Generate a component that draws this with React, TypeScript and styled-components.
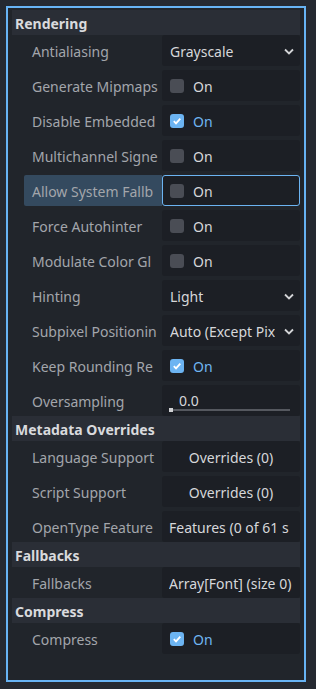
import React from 'react';
import styled, { createGlobalStyle } from 'styled-components';

const GlobalStyle = createGlobalStyle`
  html, body {
    margin: 0;
    padding: 0;
    background: #252931;
    font-family: "Noto Sans", "Open Sans", sans-serif;
    font-size: 14px;
  }
`;

const Panel = styled.div`
  box-sizing: border-box;
  margin: 6px;
  width: 300px;
  height: 676px;
  border: 2px solid #67b3f4;
  background: #21252b;
  padding: 2px 4px 0 4px;
  display: flex;
  flex-direction: column;
`;

const Header = styled.div`
  box-sizing: border-box;
  height: 25px;
  line-height: 24px;
  padding-top: 2px;
  background: #2a2e36;
  padding-left: 3px;
  font-weight: 700;
  color: #d9dadd;
`;

const Rows = styled.div`
  display: flex;
  flex-direction: column;
  gap: 4px;
`;

const Row = styled.div`
  display: grid;
  grid-template-columns: 150px 138px;
  height: 31px;
`;

const Label = styled.div<{ $active?: boolean }>`
  box-sizing: border-box;
  margin-left: 12px;
  padding: 2px 0 0 8px;
  line-height: 29px;
  color: #a3a6ab;
  white-space: nowrap;
  overflow: hidden;
  background: ${(p) => (p.$active ? '#344a5f' : 'transparent')};
  border-radius: 2px 0 0 2px;
`;

const Value = styled.div<{ $focus?: boolean; $center?: boolean; $pad?: number }>`
  box-sizing: border-box;
  position: relative;
  display: flex;
  align-items: center;
  justify-content: ${(p) => (p.$center ? 'center' : 'flex-start')};
  gap: 9px;
  padding: 1px 3px 0 ${(p) => p.$pad ?? 7}px;
  background: #1c1f25;
  border: ${(p) => (p.$focus ? '1px solid #6cb4f2' : '1px solid transparent')};
  border-radius: 3px;
  color: #d6d7da;
  white-space: nowrap;
  overflow: hidden;
`;

const ValueText = styled.span`
  flex: 1;
  overflow: hidden;
`;

const Box = styled.span<{ $on?: boolean }>`
  flex: none;
  width: 14px;
  height: 14px;
  border-radius: 3px;
  background: ${(p) => (p.$on ? '#6cb4f2' : '#4a4d55')};
  display: flex;
  align-items: center;
  justify-content: center;
`;

const OnText = styled.span<{ $on?: boolean }>`
  color: ${(p) => (p.$on ? '#6fb5f1' : '#d6d7da')};
`;

const SliderText = styled.span`
  padding-left: 9px;
  margin-top: -2px;
`;

const Track = styled.div`
  position: absolute;
  left: 6px;
  right: 9px;
  bottom: 4px;
  height: 2px;
  background: #55585f;
`;

const Grabber = styled.div`
  position: absolute;
  left: 0;
  top: -1px;
  width: 4px;
  height: 4px;
  background: #d0d1d4;
`;

const Chevron = () => (
  <svg width="10" height="7" viewBox="0 0 10 7" style={{ flex: 'none', marginRight: 2 }}>
    <path d="M1 1.5 L5 5.5 L9 1.5" stroke="#d2d3d6" strokeWidth="1.8" fill="none" />
  </svg>
);

const Check = ({ on }: { on?: boolean }) => (
  <Box $on={on}>
    {on && (
      <svg width="10" height="10" viewBox="0 0 10 10">
        <path d="M1.8 5.2 L4 7.4 L8.3 2.6" stroke="#ffffff" strokeWidth="1.8" fill="none" />
      </svg>
    )}
  </Box>
);

type Prop =
  | { label: string; kind: 'select'; text: string }
  | { label: string; kind: 'check'; on?: boolean; focus?: boolean }
  | { label: string; kind: 'slider'; text: string }
  | { label: string; kind: 'button'; text: string }
  | { label: string; kind: 'text'; text: string };

// labels are clipped by the inspector at whole glyphs, kept as shown
const sections: { title: string; props: Prop[] }[] = [
  {
    title: 'Rendering',
    props: [
      { label: 'Antialiasing', kind: 'select', text: 'Grayscale' },
      { label: 'Generate Mipmaps', kind: 'check' },
      { label: 'Disable Embedded', kind: 'check', on: true },
      { label: 'Multichannel Signe', kind: 'check' },
      { label: 'Allow System Fallb', kind: 'check', focus: true },
      { label: 'Force Autohinter', kind: 'check' },
      { label: 'Modulate Color Gl', kind: 'check' },
      { label: 'Hinting', kind: 'select', text: 'Light' },
      { label: 'Subpixel Positionin', kind: 'select', text: 'Auto (Except Pix' },
      { label: 'Keep Rounding Re', kind: 'check', on: true },
      { label: 'Oversampling', kind: 'slider', text: '0.0' },
    ],
  },
  {
    title: 'Metadata Overrides',
    props: [
      { label: 'Language Support', kind: 'button', text: 'Overrides (0)' },
      { label: 'Script Support', kind: 'button', text: 'Overrides (0)' },
      { label: 'OpenType Feature', kind: 'text', text: 'Features (0 of 61 s' },
    ],
  },
  {
    title: 'Fallbacks',
    props: [{ label: 'Fallbacks', kind: 'text', text: 'Array[Font] (size 0)' }],
  },
  {
    title: 'Compress',
    props: [{ label: 'Compress', kind: 'check', on: true }],
  },
];

function PropRow({ p }: { p: Prop }) {
  const focus = p.kind === 'check' && p.focus;
  let value: React.ReactNode = null;
  switch (p.kind) {
    case 'select':
      value = (
        <Value>
          <ValueText>{p.text}</ValueText>
          <Chevron />
        </Value>
      );
      break;
    case 'check':
      value = (
        <Value $focus={p.focus}>
          <Check on={p.on} />
          <OnText $on={p.on}>On</OnText>
        </Value>
      );
      break;
    case 'slider':
      value = (
        <Value>
          <SliderText>{p.text}</SliderText>
          <Track>
            <Grabber />
          </Track>
        </Value>
      );
      break;
    case 'button':
      value = (
        <Value $center $pad={3}>
          {p.text}
        </Value>
      );
      break;
    case 'text':
      value = (
        <Value $pad={6}>
          <ValueText>{p.text}</ValueText>
        </Value>
      );
      break;
  }
  return (
    <Row>
      <Label $active={focus}>{p.label}</Label>
      {value}
    </Row>
  );
}

export default function App() {
  return (
    <>
      <GlobalStyle />
      <Panel>
        {sections.map((s) => (
          <React.Fragment key={s.title}>
            <Header>{s.title}</Header>
            <Rows>
              {s.props.map((p) => (
                <PropRow key={p.label} p={p} />
              ))}
            </Rows>
          </React.Fragment>
        ))}
      </Panel>
    </>
  );
}
